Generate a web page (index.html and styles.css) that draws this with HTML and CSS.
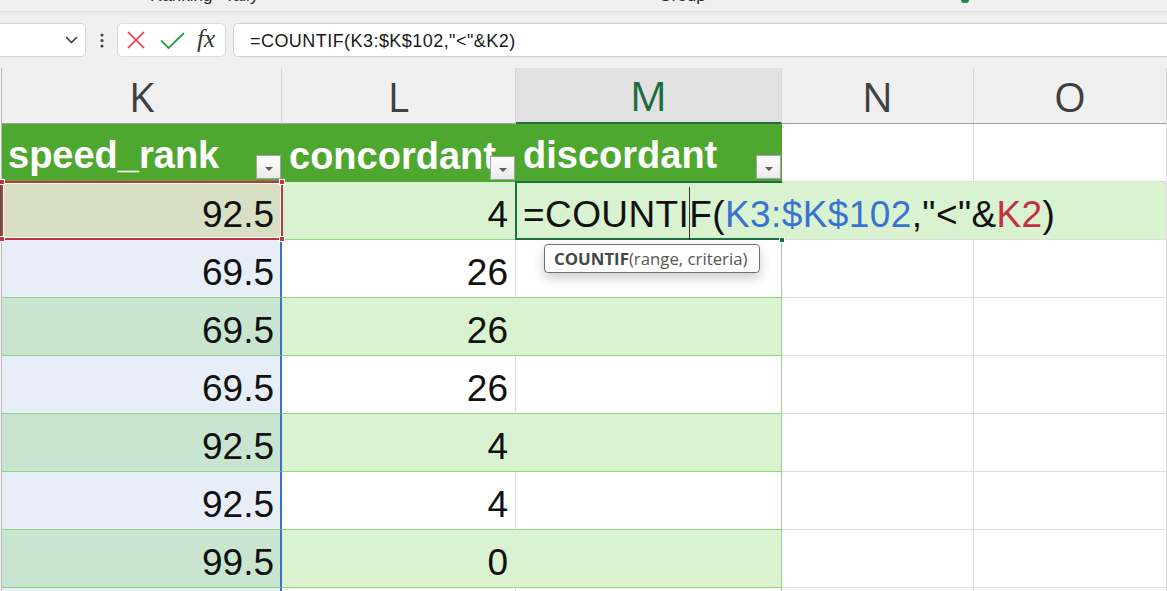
FILE: index.html
```html
<!DOCTYPE html>
<html>
<head>
<meta charset="utf-8">
<title>Excel COUNTIF</title>
<link rel="stylesheet" href="styles.css">
</head>
<body>
<div class="ribbon-tail">
  <span class="rt rt1">Ranking</span>
  <span class="rt rt2">Tally</span>
  <span class="rt rt3">Group</span>
  <span class="rt4"></span>
</div>
<div class="fbar">
  <div class="namebox">
    <svg width="13" height="8" viewBox="0 0 13 8"><polyline points="1,1 6.5,6.5 12,1" fill="none" stroke="#333" stroke-width="1.5"/></svg>
  </div>
  <div class="dots">
    <svg width="4" height="15" viewBox="0 0 4 15"><circle cx="2" cy="2" r="1.6" fill="#444"/><circle cx="2" cy="7.5" r="1.6" fill="#444"/><circle cx="2" cy="13" r="1.6" fill="#444"/></svg>
  </div>
  <div class="fbtns">
    <svg class="ico-x" width="18" height="18" viewBox="0 0 18 18"><line x1="1" y1="1" x2="17" y2="17" stroke="#e2393e" stroke-width="1.7"/><line x1="17" y1="1" x2="1" y2="17" stroke="#e2393e" stroke-width="1.7"/></svg>
    <svg class="ico-ok" width="25" height="17" viewBox="0 0 25 17"><polyline points="1,8.5 8.5,16 24,1" fill="none" stroke="#2f9e48" stroke-width="1.8"/></svg>
    <span class="fx">fx</span>
  </div>
  <div class="finput">=COUNTIF(K3:$K$102,"&lt;"&amp;K2)</div>
</div>

<div class="sheet">
  <!-- column letters -->
  <div class="rh"></div>
  <div class="ch">K</div>
  <div class="ch">L</div>
  <div class="ch act">M</div>
  <div class="ch">N</div>
  <div class="ch">O</div>

  <!-- table header -->
  <div class="rh"></div>
  <div class="th th-k">speed_rank<span class="flt"></span></div>
  <div class="th">concordant<span class="flt"></span></div>
  <div class="th th-m">discordant<span class="flt"></span></div>
  <div class="bl"></div>
  <div class="bl"></div>

  <!-- row 1 (editing) -->
  <div class="rh rh-act"></div>
  <div class="c k k-sel">92.5<span class="sel"><i class="h tl"></i><i class="h tr"></i><i class="h bl-h"></i><i class="h br"></i></span></div>
  <div class="c l g">4</div>
  <div class="c m g edit"><span class="pre">=COUNTI</span>F(<span class="ref-b">K3:$K$102</span>,"&lt;"&amp;<span class="ref-r">K2</span>)<span class="fill"></span><div class="tip"><b>COUNTIF</b>(range, criteria)</div></div>
  <div class="bl e1"></div>
  <div class="bl e2"></div>

  <div class="rh"></div>
  <div class="c k kw">69.5</div>
  <div class="c l w">26</div>
  <div class="c m w"></div>
  <div class="bl"></div>
  <div class="bl"></div>

  <div class="rh"></div>
  <div class="c k kg">69.5</div>
  <div class="c l g">26</div>
  <div class="c m g"></div>
  <div class="bl"></div>
  <div class="bl"></div>

  <div class="rh"></div>
  <div class="c k kw">69.5</div>
  <div class="c l w">26</div>
  <div class="c m w"></div>
  <div class="bl"></div>
  <div class="bl"></div>

  <div class="rh"></div>
  <div class="c k kg">92.5</div>
  <div class="c l g">4</div>
  <div class="c m g"></div>
  <div class="bl"></div>
  <div class="bl"></div>

  <div class="rh"></div>
  <div class="c k kw">92.5</div>
  <div class="c l w">4</div>
  <div class="c m w"></div>
  <div class="bl"></div>
  <div class="bl"></div>

  <div class="rh"></div>
  <div class="c k kg">99.5</div>
  <div class="c l g">0</div>
  <div class="c m g"></div>
  <div class="bl"></div>
  <div class="bl"></div>

  <div class="rh"></div>
  <div class="c k kw">92.5</div>
  <div class="c l w">4</div>
  <div class="c m w"></div>
  <div class="bl"></div>
  <div class="bl"></div>
</div>
</body>
</html>
```

FILE: styles.css
```css
* { box-sizing: border-box; margin: 0; padding: 0; }
html, body { width: 1167px; height: 591px; overflow: hidden; background: #fff; }
body { font-family: "Liberation Sans", Arial, sans-serif; }

/* clipped ribbon text at the very top */
.ribbon-tail {
  height: 11px;
  background: #f0f0f0;
  overflow: hidden;
  display: flex;
  align-items: flex-start;
  font-size: 17px;
  line-height: 16px;
  color: #2b2b2b;
}
.rt { margin-top: -12px; white-space: nowrap; }
.rt1 { margin-left: 150px; }
.rt2 { margin-left: 12px; }
.rt3 { margin-left: 400px; }
.rt4 { margin-left: 255px; width: 8px; height: 3px; background: #1f8a4c; border-radius: 0 0 3px 3px; }

/* formula bar */
.fbar {
  height: 57px;
  padding-top: 12px;
  display: flex;
  align-items: flex-start;
  background: linear-gradient(#d8d8d8 0, #e6e6e6 1px, #ececec 3px, #f0f0f0 5px);
}
.namebox {
  width: 90px;
  height: 34px;
  margin-left: -4px;
  background: #fff;
  border: 1px solid #d4d4d4;
  border-radius: 5px;
  display: flex;
  align-items: center;
  justify-content: flex-end;
  padding-right: 7px;
}
.dots {
  width: 31px;
  height: 34px;
  display: flex;
  align-items: center;
  justify-content: center;
}
.fbtns {
  width: 109px;
  height: 34px;
  background: #fff;
  border: 1px solid #dadada;
  border-radius: 5px;
  display: flex;
  align-items: center;
  padding-left: 9px;
}
.ico-ok { margin-left: 15px; }
.fx {
  margin-left: 12px;
  font-family: "Liberation Serif", "Times New Roman", serif;
  font-style: italic;
  font-size: 25px;
  line-height: 25px;
  color: #333;
  margin-top: -3px;
}
.finput {
  flex: 1;
  height: 34px;
  margin-left: 7px;
  background: #fff;
  border: 1px solid #d0d0d0;
  border-right: none;
  border-radius: 5px 0 0 5px;
  padding: 2px 0 0 16px;
  font-size: 18px;
  line-height: 30px;
  letter-spacing: 0.45px;
  color: #1a1a1a;
  white-space: nowrap;
}

/* sheet grid */
.sheet {
  display: grid;
  grid-template-columns: 2px 280px 234px 266px 192px 1fr;
  grid-template-rows: 56px repeat(9, 58px);
}
.rh { background: #f4f4f4; border-right: 1px solid #b9b9b9; }
.rh-act { background: #1d6b40; border-right: none; }

.ch {
  background: #f0f0f0;
  border-right: 1px solid #d6d6d6;
  border-bottom: 1px solid #9f9f9f;
  display: flex;
  align-items: center;
  justify-content: center;
  font-family: "Open Sans", "Liberation Sans", sans-serif;
  font-size: 41px;
  color: #404040;
  background-clip: padding-box;
}
.ch.act {
  background: #e1e1e1;
  color: #1d6b41;
  border-bottom: 2px solid #1e6e42;
}

.th {
  position: relative;
  background: #4ea72e;
  color: #fff;
  font-weight: bold;
  font-size: 38px;
  line-height: 38px;
  padding: 0 0 7px 7px;
  display: flex;
  align-items: flex-end;
  white-space: nowrap;
  overflow: hidden;
}
.th-k { padding-left: 6px; border-bottom: 1px solid #c4333f; }
.th-m { border-bottom: 1px solid #1e6e42; }
.flt {
  position: absolute;
  right: 1px;
  bottom: 2px;
  width: 25px;
  height: 24px;
  border: 1px solid #a3a3a3;
  background: linear-gradient(#ffffff, #ebebeb);
}
.flt::after {
  content: "";
  position: absolute;
  left: 8px;
  top: 11px;
  border-left: 4px solid transparent;
  border-right: 4px solid transparent;
  border-top: 4px solid #5a5a5a;
}

.bl {
  background: #fff;
  border-right: 1px solid #dedede;
  border-bottom: 1px solid #dedede;
}
.bl.e1 { background: #d9f2d0; border-right: none; }
.bl.e2 { background: #d9f2d0; }

/* data cells */
.c {
  display: flex;
  align-items: flex-end;
  justify-content: flex-end;
  padding: 0 7px 6px 0;
  font-size: 37px;
  line-height: 37px;
  color: #111;
  border-bottom: 1px solid #8ed67f;
  white-space: nowrap;
}
.k { border-right: 2px solid #3a6fcf; padding-right: 6px; }
.kw { background: #e8eef8; }
.kg { background: #c9e5d0; }
.k-sel {
  position: relative;
  z-index: 2;
  background: #d8dfc3;
  border-right: none;
  padding-right: 8px;
}
.sel {
  position: absolute;
  top: -1px;
  left: -1px;
  right: -1px;
  bottom: -1px;
  border: 2px solid #c4333f;
  box-shadow: inset 0 0 0 1px #fff;
}
.h {
  position: absolute;
  width: 6px;
  height: 6px;
  background: #c4333f;
  border: 1px solid #fff;
}
.tl { left: -4px; top: -4px; }
.tr { right: -4px; top: -4px; }
.bl-h { left: -4px; bottom: -4px; }
.br { right: -4px; bottom: -4px; }

.l.g { background: #d9f2d0; border-right: 1px solid #d9f2d0; }
.l.w { background: #fff; border-right: 1px solid #dadada; }
.m { border-right: 1px solid #8ed67f; }
.m.g { background: #d9f2d0; }
.m.w { background: #fff; }

.edit {
  position: relative;
  z-index: 3;
  justify-content: flex-start;
  padding-left: 7px;
  border-right: none;
  overflow: visible;
  letter-spacing: 0.4px;
}
.edit::before {
  content: "";
  position: absolute;
  left: -1px;
  top: -1px;
  right: 0;
  bottom: -1px;
  border: 2px solid #1e6e42;
  border-right: none;
  pointer-events: none;
}
.pre { position: relative; }
.pre::after {
  content: "";
  position: absolute;
  right: -1px;
  top: -9px;
  bottom: -7px;
  width: 1px;
  background: #333;
}
.ref-b { color: #3a72d1; }
.ref-r { color: #c3313f; }
.fill {
  position: absolute;
  right: -3px;
  bottom: -4px;
  width: 6px;
  height: 6px;
  background: #1e6e42;
  border: 1px solid #fff;
}
.tip {
  position: absolute;
  left: 28px;
  top: 62px;
  width: 216px;
  height: 29px;
  background: #fff;
  border: 1.5px solid #707070;
  border-radius: 4px;
  box-shadow: 0 5px 12px rgba(0, 0, 0, 0.2);
  display: flex;
  align-items: center;
  padding-left: 9px;
  font-family: "Open Sans", "Liberation Sans", sans-serif;
  font-size: 16.8px;
  line-height: 20px;
  letter-spacing: 0;
  color: #555;
}
.tip b { color: #474747; font-weight: 700; }
```
